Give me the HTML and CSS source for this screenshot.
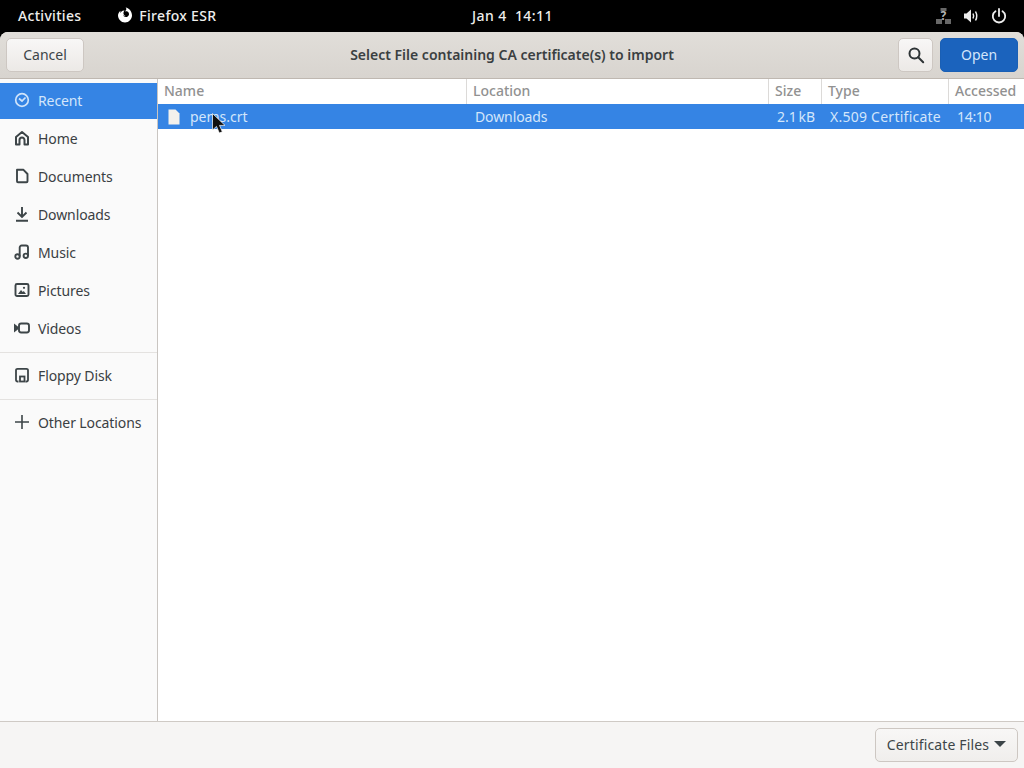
FILE: index.html
```html
<!DOCTYPE html>
<html lang="en">

<head>
    <meta charset="UTF-8">
    <title>Select File</title>
    <link rel="stylesheet" href="styles.css">
</head>

<body>

    <div class="top-bar">
        <div class="top-left">
            <span class="top-item">Activities</span>
            <span class="top-app">
                <svg class="app-icon" width="16" height="16" viewBox="0 0 16 16">
                    <path fill="#fff" d="M8.500 .5c1 .7 1 1.700.6 2.400-.4.7-1.100 1-1.100 1.700 1.500-.6 3.200 0 3.800 1.400.7 1.600-.2 3.400-1.900 3.900-1.600.5-3.200-.3-3.800-1.600.8.500 1.800.5 2.400 0-1 0-1.800-.7-2-1.600-.2-1 .2-2.300 1-3.300C5.200 3.200 3.500 4.900 3.500 6.300c-.2-.9-.2-1.800 0-2.500C2 5 1 6.800 1 8.500 1 12.100 4.100 15.500 8 15.500s7-3.400 7-7C15 4.700 12.400 1 8.500 .5z"/>
                </svg>
                Firefox ESR
            </span>
        </div>
        <div class="top-clock">Jan 4&nbsp;&nbsp;14:11</div>
        <div class="top-right">
            <svg class="net-icon" width="17" height="17" viewBox="0 0 17 17" fill="#686868">
                <rect x="1" y="11" width="6" height="5"/>
                <rect x="10" y="11" width="6" height="5"/>
                <rect x="5.500" y="0" width="6" height="3"/>
                <text x="8.500" y="12" class="net-mark">?</text>
            </svg>
            <svg width="16" height="16" viewBox="0 0 16 16" fill="none" stroke="#eee" stroke-width="1.500">
                <path fill="#eee" stroke="none" d="M1 5.500h2.500L8 1.500v13l-4.500-4H1z"/>
                <path d="M10 5.500c.8 1.500.8 3.500 0 5M12.500 3.500c1.500 2.700 1.500 6.300 0 9"/>
            </svg>
            <svg width="16" height="16" viewBox="0 0 16 16" fill="none" stroke="#eee" stroke-width="1.800" stroke-linecap="round">
                <path d="M8 1v7"/>
                <path d="M4.500 3.200a6.200 6.200 0 1 0 7 0"/>
            </svg>
        </div>
    </div>

    <div class="dialog">
        <div class="header">
            <button class="btn btn-cancel">Cancel</button>
            <div class="title">Select File containing CA certificate(s) to import</div>
            <button class="btn btn-search">
                <svg width="18" height="18" viewBox="0 0 18 18" fill="none" stroke="#2e3436" stroke-width="2">
                    <circle cx="7.500" cy="7.500" r="5"/>
                    <path d="M11.200 11.200l5 5" stroke-linecap="round"/>
                </svg>
            </button>
            <button class="btn btn-open">Open</button>
        </div>

        <div class="main">
            <div class="side-menu">
                <div class="side-group">
                    <div class="side-item active">
                        <svg class="side-icon" viewBox="0 0 16 16" fill="none" stroke="#cfe3fa" stroke-width="1.700">
                            <circle cx="8" cy="8" r="6.300"/>
                            <path d="M5 6.500l3 2.500 3.500-3.500"/>
                        </svg>
                        Recent
                    </div>
                    <div class="side-item">
                        <svg class="side-icon" viewBox="0 0 16 16" fill="none" stroke="#3d4548" stroke-width="2" stroke-linejoin="round">
                            <path d="M2 14.500V7l6-5 6 5v7.500h-3.500V10a2.500 2.500 0 0 0-5 0v4.500z"/>
                        </svg>
                        Home
                    </div>
                    <div class="side-item">
                        <svg class="side-icon" viewBox="0 0 16 16" fill="none" stroke="#3d4548" stroke-width="1.900" stroke-linejoin="round">
                            <path d="M3 1.800h6.500L13.500 6v7.200a1 1 0 0 1-1 1h-8.500a1 1 0 0 1-1-1z"/>
                        </svg>
                        Documents
                    </div>
                    <div class="side-item">
                        <svg class="side-icon" viewBox="0 0 16 16" fill="none" stroke="#3d4548" stroke-width="1.900">
                            <path d="M8 1v10M3.500 6.500L8 11l4.500-4.500M2 14.800h12"/>
                        </svg>
                        Downloads
                    </div>
                    <div class="side-item">
                        <svg class="side-icon" viewBox="0 0 16 16" fill="none" stroke="#3d4548" stroke-width="1.900">
                            <circle cx="3.500" cy="12.500" r="2.200"/>
                            <circle cx="11.800" cy="11.800" r="2.200"/>
                            <path d="M5.700 12.500V3.500a2 2 0 0 1 2-2h4.300a2 2 0 0 1 2 2v8.300"/>
                        </svg>
                        Music
                    </div>
                    <div class="side-item">
                        <svg class="side-icon" viewBox="0 0 16 16" fill="none" stroke="#3d4548" stroke-width="1.900">
                            <rect x="1.500" y="2" width="13" height="12" rx="1.500"/>
                            <path fill="#3d4548" stroke="none" d="M4 12l3-4 1.800 2 1-1 2.200 3z"/>
                            <circle cx="10" cy="5.800" r="1.100" fill="#3d4548" stroke="none"/>
                        </svg>
                        Pictures
                    </div>
                    <div class="side-item">
                        <svg class="side-icon" viewBox="0 0 16 16" fill="none" stroke="#3d4548" stroke-width="1.900">
                            <rect x="5" y="3.500" width="10" height="9" rx="2.200"/>
                            <path fill="#3d4548" stroke="none" d="M0 3.500l4.500 3.500v2L0 12.500z"/>
                        </svg>
                        Videos
                    </div>
                </div>
                <div class="side-group side-group-small">
                    <div class="side-item">
                        <svg class="side-icon" viewBox="0 0 16 16" fill="none" stroke="#3d4548" stroke-width="1.800">
                            <path d="M3.500 1.800h9a1.500 1.500 0 0 1 1.500 1.500V13a1.500 1.500 0 0 1-1.500 1.500h-1M4.500 14.500h-1A1.500 1.500 0 0 1 2 13V3.300a1.500 1.500 0 0 1 1.500-1.500"/>
                            <rect x="6" y="9.500" width="4.500" height="5"/>
                        </svg>
                        Floppy Disk
                    </div>
                </div>
                <div class="side-group side-group-small">
                    <div class="side-item">
                        <svg class="side-icon" viewBox="0 0 16 16" fill="none" stroke="#3d4548" stroke-width="1.600">
                            <path d="M8 1v14M1 8h14"/>
                        </svg>
                        Other Locations
                    </div>
                </div>
            </div>

            <div class="content">
                <div class="file-row file-head">
                    <div class="col-name">Name</div>
                    <div class="col-location">Location</div>
                    <div class="col-size">Size</div>
                    <div class="col-type">Type</div>
                    <div class="col-accessed">Accessed</div>
                </div>
                <div class="file-row file-selected">
                    <div class="col-name">
                        <svg class="file-icon" width="16" height="16" viewBox="0 0 16 16" fill="#f3f1ec">
                            <path d="M2.500 0.500h7l4 4v11h-11z"/>
                        </svg>
                        <span>pems.crt</span>
                    </div>
                    <div class="col-location">Downloads</div>
                    <div class="col-size">2.1 kB</div>
                    <div class="col-type">X.509 Certificate</div>
                    <div class="col-accessed">14:10</div>
                </div>
                <svg class="cursor" width="14" height="21" viewBox="0 0 14 21">
                    <path fill="#111" stroke="#fff" stroke-width=".7" d="M.5 .5v16.500l4-3.600 2.800 6.600 3-1.300-2.800-6.300h5.500z"/>
                </svg>
            </div>
        </div>

        <div class="footer">
            <button class="btn btn-filter">Certificate Files <span class="caret"></span></button>
        </div>
    </div>

</body>

</html>
```

FILE: styles.css
```css
/* CSS styles */

* {
    box-sizing: border-box;
}

html, body {
    height: 100%;
}

body {
    font-family: "Noto Sans", sans-serif;
    font-size: 14px;
    color: #2e3436;
    margin: 0;
    padding: 0;
    background: #000;
    display: flex;
    flex-direction: column;
    overflow: hidden;
}

.top-bar {
    height: 32px;
    flex: none;
    background: #000;
    color: #eeeeec;
    font-weight: 500;
    letter-spacing: 0.3px;
    display: grid;
    grid-template-columns: 1fr auto 1fr;
    align-items: center;
    padding: 0 17px 2px 18px;
}

.top-left {
    display: flex;
    align-items: center;
    gap: 36px;
}

.top-app {
    display: flex;
    align-items: center;
    gap: 6px;
}

.top-clock {
    letter-spacing: 0.45px;
}

.top-right {
    display: flex;
    justify-content: flex-end;
    align-items: center;
    gap: 12px;
    padding-top: 2px;
}

.net-icon {
    margin-right: -1px;
}

.net-mark {
    font-size: 12px;
    font-weight: 700;
    text-anchor: middle;
    fill: #b5b5b5;
}

.dialog {
    flex: 1;
    display: flex;
    flex-direction: column;
    background: #f6f5f4;
    border-radius: 8px 8px 0 0;
    overflow: hidden;
}

.header {
    height: 47px;
    flex: none;
    display: flex;
    align-items: center;
    padding: 0 6px;
    background: linear-gradient(#e1ded9, #d8d4cf);
    border-bottom: 1px solid #bfb8b1;
}

.title {
    flex: 1;
    text-align: center;
    font-weight: 600;
    padding: 0 0 2px 42px;
    color: #3a3f41;
}

.btn {
    font: inherit;
    height: 34px;
    padding: 0 0 2px;
    color: #3d4548;
    background: linear-gradient(#f8f7f6, #ece9e6);
    border: 1px solid #cdc7c2;
    border-radius: 5px;
}

.btn-cancel {
    width: 78px;
}

.btn-search {
    width: 35px;
    padding: 0;
    margin-right: 7px;
    display: flex;
    align-items: center;
    justify-content: center;
}

.btn-open {
    width: 78px;
    color: #d3e6fb;
    background: #1b63bd;
    border-color: #1a5fb4;
}

.main {
    flex: 1;
    display: flex;
    min-height: 0;
}

.side-menu {
    width: 158px;
    flex: none;
    background: #fafafa;
    border-right: 1px solid #c9c5c1;
    padding-top: 4px;
}

.side-group {
    padding-bottom: 3px;
    border-bottom: 1px solid #e4e2e0;
}

.side-group-small {
    padding: 5px 0 3px;
}

.side-group:last-child {
    border-bottom: none;
}

.side-item {
    height: 36px;
    margin-bottom: 2px;
    padding: 0 0 2px 14px;
    display: flex;
    align-items: center;
    gap: 8px;
    color: #3a4043;
    letter-spacing: -0.1px;
}

.side-item.active {
    background: #3584e4;
    color: #d3e6fb;
}

.side-icon {
    width: 16px;
    height: 16px;
    flex: none;
}

.content {
    flex: 1;
    background: #fff;
    position: relative;
}

.file-row {
    display: grid;
    grid-template-columns: 308px 302px 53px 127px 1fr;
    align-items: center;
}

.file-head {
    height: 25px;
    color: #919191;
    font-weight: 500;
}

.file-head > div {
    padding: 0 0 2px 6px;
    line-height: 23px;
    border-left: 1px solid #dcdad8;
}

.file-head > div:first-child {
    border-left: none;
}

.file-selected {
    height: 25px;
    background: #3584e4;
    color: #d3e6fb;
}

.file-selected > div {
    padding-left: 8px;
    white-space: nowrap;
}

.file-selected .col-name {
    display: flex;
    align-items: center;
    gap: 8px;
}

.file-selected .col-location {
    padding-left: 9px;
    letter-spacing: -0.1px;
}

.file-selected .col-size {
    padding-left: 9px;
    word-spacing: -2px;
}

.file-selected .col-type {
    padding-left: 9px;
    letter-spacing: 0.25px;
}

.file-selected .col-accessed {
    padding-left: 9px;
    letter-spacing: -0.3px;
}

.file-icon {
    flex: none;
}

.cursor {
    position: absolute;
    left: 54px;
    top: 34px;
}

.footer {
    height: 47px;
    flex: none;
    display: flex;
    justify-content: flex-end;
    align-items: center;
    padding: 0 6px;
    background: #f6f5f4;
    border-top: 1px solid #cfcac5;
}

.btn-filter {
    width: 143px;
    display: flex;
    align-items: center;
    justify-content: center;
    gap: 5px;
    letter-spacing: 0.15px;
    background: linear-gradient(#f8f7f6, #f0eeec);
}

.caret {
    width: 0;
    height: 0;
    border-left: 6px solid transparent;
    border-right: 6px solid transparent;
    border-top: 6px solid #3d4548;
}
```
